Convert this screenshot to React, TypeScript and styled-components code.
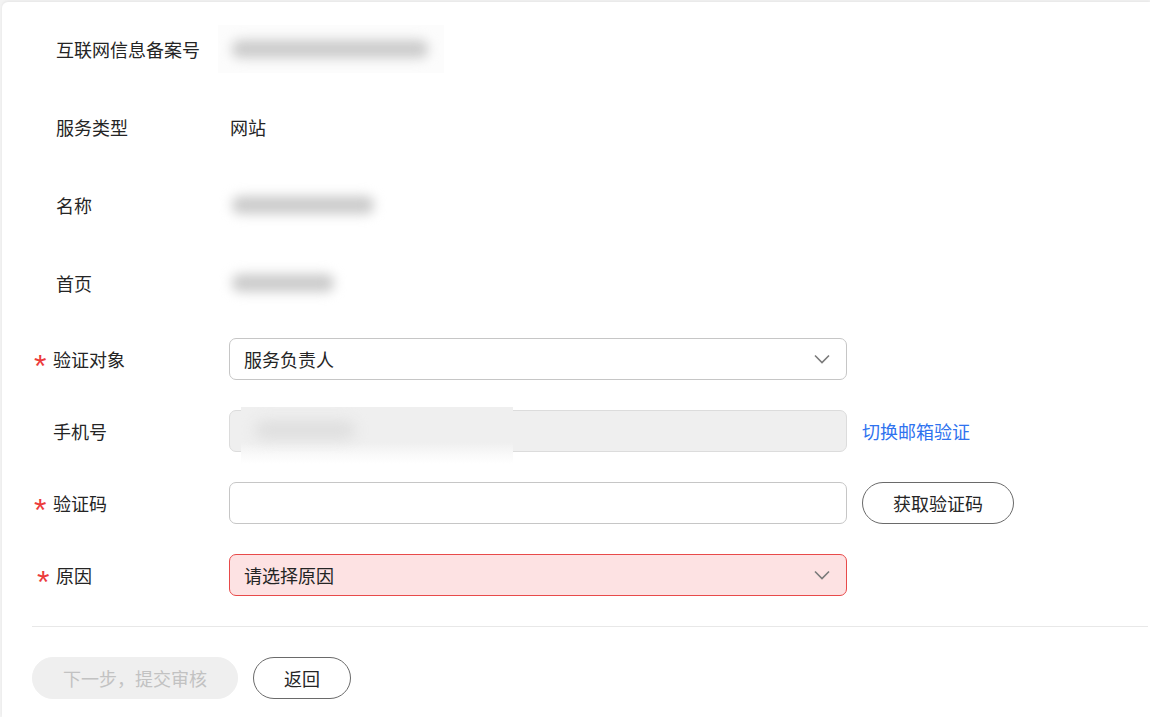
import styled, { createGlobalStyle } from "styled-components";

const GlobalStyle = createGlobalStyle`
  html, body {
    margin: 0;
    padding: 0;
    background: #f3f3f3;
  }
  body {
    font-family: "Noto Sans CJK SC", "Noto Sans", "Liberation Sans", sans-serif;
    color: #252525;
    overflow: hidden;
  }
`;

const Card = styled.main`
  margin: 2px 0 0 2px;
  min-height: 715px;
  background: #fff;
  border-radius: 6px 0 0 0;
  box-shadow: 0 -1px 3px rgba(0, 0, 0, 0.06);
  padding: 8px 2px 0 30px;
  box-sizing: border-box;
`;

const InfoList = styled.section`
  display: flex;
  flex-direction: column;
`;

const InfoRow = styled.div`
  height: 78px;
  display: flex;
  align-items: center;
  padding-left: 24px;
`;

const InfoLabel = styled.div`
  width: 174px;
  font-size: 18px;
  line-height: 24px;
  flex-shrink: 0;
`;

const InfoValue = styled.div`
  font-size: 18px;
  line-height: 24px;
`;

const BlurBox = styled.div<{ $width: number; $boxed?: boolean }>`
  width: ${(p) => p.$width}px;
  height: 48px;
  margin-left: ${(p) => (p.$boxed ? -12 : 0)}px;
  padding: 0 ${(p) => (p.$boxed ? 14 : 2)}px;
  box-sizing: border-box;
  display: flex;
  align-items: center;
  background: ${(p) => (p.$boxed ? "#fcfcfc" : "transparent")};
`;

const BlurBar = styled.div<{ $width: number }>`
  width: ${(p) => p.$width}px;
  height: 18px;
  border-radius: 8px;
  background: #cbcbcb;
  filter: blur(6px);
`;

const FormList = styled.section`
  margin-top: 16px;
  display: flex;
  flex-direction: column;
  gap: 30px;
`;

const FormRow = styled.div`
  display: flex;
  align-items: center;
  height: 42px;
`;

const FormLabel = styled.label<{ $shift?: number }>`
  width: 197px;
  flex-shrink: 0;
  display: flex;
  align-items: center;
  padding-left: ${(p) => p.$shift ?? 0}px;
  box-sizing: border-box;
  font-size: 18px;
  line-height: 24px;
`;

const Required = styled.span`
  width: 21px;
  height: 32px;
  padding-left: 2px;
  box-sizing: border-box;
  color: #ec3b3b;
  font-family: "Liberation Sans", sans-serif;
  font-size: 32px;
  line-height: 32px;
  transform: translateY(7px);
`;

const FieldBox = styled.div<{ $variant?: "normal" | "disabled" | "error" }>`
  position: relative;
  width: 618px;
  height: 42px;
  box-sizing: border-box;
  display: flex;
  align-items: center;
  justify-content: space-between;
  padding: 0 16px 0 14px;
  border-radius: 7px;
  font-size: 18px;
  border: 1px solid
    ${(p) =>
      p.$variant === "error" ? "#e84a4a" : p.$variant === "disabled" ? "#dcdcdc" : "#c6c6c6"};
  background: ${(p) =>
    p.$variant === "error" ? "#fde2e3" : p.$variant === "disabled" ? "#efefef" : "#fff"};
`;

const FieldText = styled.span`
  font-size: 18px;
  line-height: 24px;
  color: #252525;
`;

const PhoneMask = styled.div`
  position: absolute;
  left: 11px;
  top: -4px;
  width: 272px;
  height: 57px;
  background: linear-gradient(#efefef 0%, #efefef 62%, #fafafa 85%, #fff 100%);
  overflow: hidden;
`;

const PhoneBlob = styled.div`
  margin: 14px 0 0 14px;
  width: 100px;
  height: 18px;
  border-radius: 9px;
  background: #dedede;
  filter: blur(7px);
`;

const SideLink = styled.a`
  margin-left: 15px;
  font-size: 18px;
  color: #2f73ef;
  text-decoration: none;
  cursor: pointer;
`;

const PillButton = styled.button<{ $disabled?: boolean }>`
  height: 42px;
  padding: 0 30px;
  border-radius: 21px;
  font-family: inherit;
  font-size: 18px;
  cursor: pointer;
  border: 1px solid ${(p) => (p.$disabled ? "#efefef" : "#6a6a6a")};
  background: ${(p) => (p.$disabled ? "#efefef" : "#fff")};
  color: ${(p) => (p.$disabled ? "#c2c2c2" : "#252525")};
`;

const SideButton = styled(PillButton)`
  margin-left: 15px;
  width: 152px;
  padding: 0;
`;

const Divider = styled.hr`
  margin: 30px 0 0 0;
  border: none;
  border-top: 1px solid #e8e8e8;
`;

const Actions = styled.div`
  display: flex;
  gap: 15px;
  padding-top: 30px;
`;

const Chevron = () => (
  <svg width="16" height="10" viewBox="0 0 16 10" fill="none">
    <polyline points="1,1.5 8,8.5 15,1.5" stroke="#7a7a7a" strokeWidth="1.6" />
  </svg>
);

const App = () => {
  return (
    <>
      <GlobalStyle />
      <Card>
        <InfoList>
          <InfoRow>
            <InfoLabel>互联网信息备案号</InfoLabel>
            <BlurBox $width={226} $boxed>
              <BlurBar $width={196} />
            </BlurBox>
          </InfoRow>
          <InfoRow>
            <InfoLabel>服务类型</InfoLabel>
            <InfoValue>网站</InfoValue>
          </InfoRow>
          <InfoRow>
            <InfoLabel>名称</InfoLabel>
            <BlurBox $width={150}>
              <BlurBar $width={142} />
            </BlurBox>
          </InfoRow>
          <InfoRow>
            <InfoLabel>首页</InfoLabel>
            <BlurBox $width={110}>
              <BlurBar $width={102} />
            </BlurBox>
          </InfoRow>
        </InfoList>

        <FormList>
          <FormRow>
            <FormLabel>
              <Required>*</Required>
              验证对象
            </FormLabel>
            <FieldBox>
              <FieldText>服务负责人</FieldText>
              <Chevron />
            </FieldBox>
          </FormRow>
          <FormRow>
            <FormLabel>
              <Required />
              手机号
            </FormLabel>
            <FieldBox $variant="disabled">
              <PhoneMask>
                <PhoneBlob />
              </PhoneMask>
            </FieldBox>
            <SideLink>切换邮箱验证</SideLink>
          </FormRow>
          <FormRow>
            <FormLabel>
              <Required>*</Required>
              验证码
            </FormLabel>
            <FieldBox />
            <SideButton>获取验证码</SideButton>
          </FormRow>
          <FormRow>
            <FormLabel $shift={3}>
              <Required>*</Required>
              原因
            </FormLabel>
            <FieldBox $variant="error">
              <FieldText>请选择原因</FieldText>
              <Chevron />
            </FieldBox>
          </FormRow>
        </FormList>

        <Divider />

        <Actions>
          <PillButton $disabled>下一步，提交审核</PillButton>
          <PillButton>返回</PillButton>
        </Actions>
      </Card>
    </>
  );
};

export default App;
